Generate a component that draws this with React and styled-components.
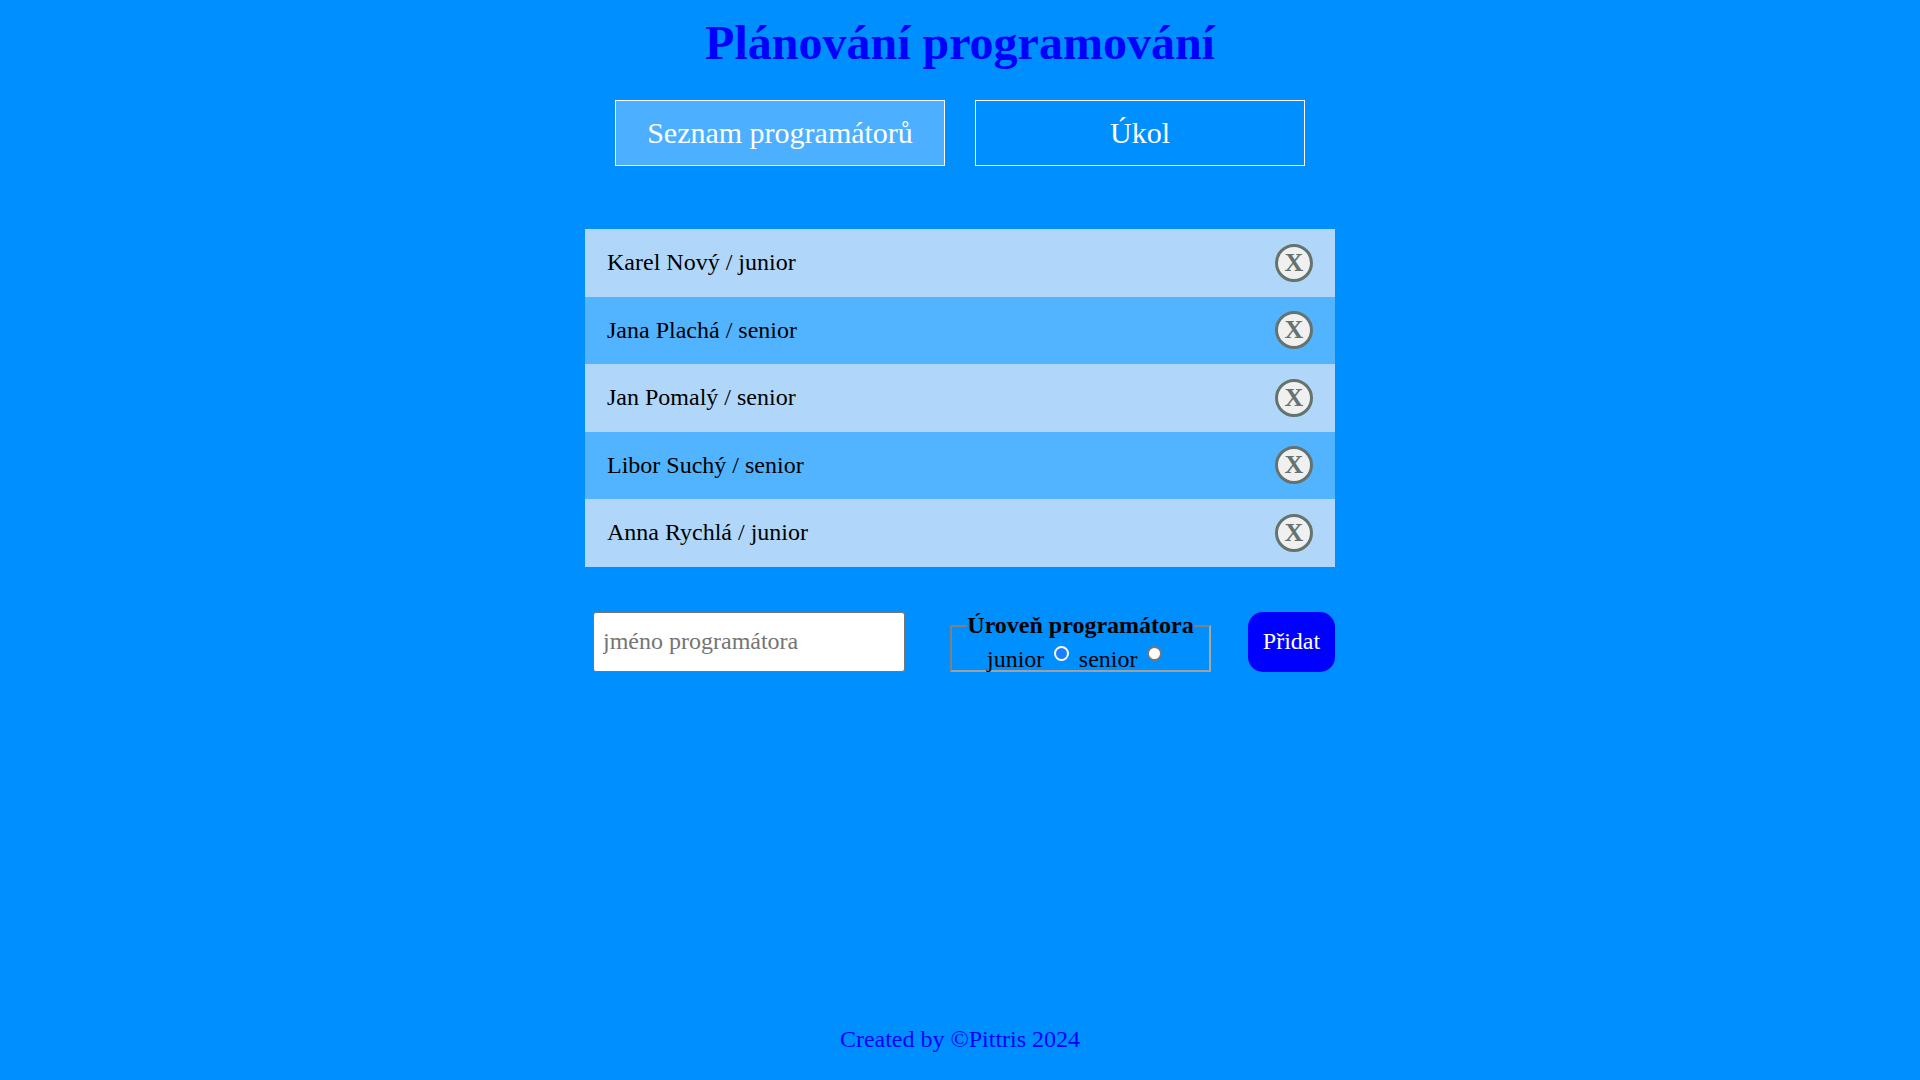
import React from 'react'
import styled, { createGlobalStyle } from 'styled-components'

const programmers = [
  { name: 'Karel Nový', level: 'junior' },
  { name: 'Jana Plachá', level: 'senior' },
  { name: 'Jan Pomalý', level: 'senior' },
  { name: 'Libor Suchý', level: 'senior' },
  { name: 'Anna Rychlá', level: 'junior' },
]

const App = () => (
  <Page>
    <GlobalStyle />
    <Title>Plánování programování</Title>
    <Tabs>
      <Tab $active>Seznam programátorů</Tab>
      <Tab>Úkol</Tab>
    </Tabs>
    <Content>
      <List>
        {programmers.map((p) => (
          <Row key={p.name}>
            <span>{p.name} / {p.level}</span>
            <RemoveButton>X</RemoveButton>
          </Row>
        ))}
      </List>
      <Form>
        <NameInput placeholder="jméno programátora" />
        <Level>
          <LevelLegend>Úroveň programátora</LevelLegend>
          <LevelOptions>
            <label>junior</label>
            <Radio name="level" defaultChecked />
            <label>senior</label>
            <Radio name="level" />
          </LevelOptions>
        </Level>
        <AddButton>Přidat</AddButton>
      </Form>
    </Content>
    <Footer>Created by ©Pittris 2024</Footer>
  </Page>
)

const GlobalStyle = createGlobalStyle`
  html, body {
    margin: 0;
    padding: 0;
    background: #008fff;
  }
`
const Page = styled.div`
  min-height: 1080px;
  box-sizing: border-box;
  display: flex;
  flex-direction: column;
  align-items: center;
  font-family: "Liberation Serif", "Times New Roman", serif;
  color: #000;
  overflow: hidden;
`
const Title = styled.h1`
  margin: 15px 0 0;
  font-size: 48px;
  line-height: 55px;
  font-weight: bold;
  color: #0000ff;
`
const Tabs = styled.div`
  display: flex;
  gap: 30px;
  margin-top: 30px;
`
const Tab = styled.button`
  width: 330px;
  height: 66px;
  padding: 0;
  border: 1px solid #fff;
  background: ${({ $active }) => ($active ? '#4dafff' : 'transparent')};
  color: #fff;
  font-family: inherit;
  font-size: 30px;
`
const Content = styled.div`
  width: 750px;
  margin-top: 63px;
`
const List = styled.div`
  display: flex;
  flex-direction: column;
`
const Row = styled.div`
  height: 67.5px;
  box-sizing: border-box;
  padding: 0 22px;
  display: flex;
  align-items: center;
  justify-content: space-between;
  font-size: 24px;
  background: #b0d7f9;
  &:nth-child(even) {
    background: #52b3ff;
  }
`
const RemoveButton = styled.button`
  width: 38px;
  height: 38px;
  padding: 0;
  border: 3px solid #65736f;
  border-radius: 50%;
  background: #f0f0f0;
  color: #65736f;
  font-family: inherit;
  font-size: 26px;
  font-weight: bold;
  line-height: 1;
`
const Form = styled.form`
  display: flex;
  align-items: flex-end;
  justify-content: space-between;
  margin-top: 45.5px;
  padding-left: 8px;
`
const NameInput = styled.input`
  width: 312px;
  height: 60px;
  box-sizing: border-box;
  padding: 0 9px 1px;
  border: 1px solid #767676;
  border-radius: 3px;
  background: #fff;
  font-family: inherit;
  font-size: 24px;
  &::placeholder {
    color: #757575;
  }
`
const Level = styled.fieldset`
  width: 261px;
  height: 60px;
  box-sizing: border-box;
  margin: 0 0 0 45px;
  padding: 0;
  border: 2px solid #808080;
  border-right-color: #a8a8a8;
  border-bottom-color: #a0a0a0;
  font-size: 24px;
  line-height: 27px;
  white-space: nowrap;
`
const LevelLegend = styled.legend`
  padding: 0;
  margin: 0 auto;
  font-weight: bold;
  line-height: 27px;
`
const LevelOptions = styled.div`
  padding: 7px 0 0 35px;
`
const Radio = styled.input.attrs({ type: 'radio' })`
  appearance: none;
  width: 15px;
  height: 15px;
  box-sizing: border-box;
  margin: 0 10px 0 9.5px;
  border-radius: 50%;
  border: 2px solid #777;
  background: #fff;
  vertical-align: 6px;
  &:checked {
    border-color: #fff;
    background: #1a7fff;
  }
`
const AddButton = styled.button`
  width: 87px;
  height: 60px;
  padding: 0 0 1px;
  border: none;
  border-radius: 15px;
  background: #0000ff;
  color: #fff;
  font-family: inherit;
  font-size: 24px;
  margin-left: 37px;
`
const Footer = styled.footer`
  margin-top: auto;
  padding-bottom: 27px;
  color: #0000ff;
  font-size: 24px;
  line-height: 27px;
`

export default App
